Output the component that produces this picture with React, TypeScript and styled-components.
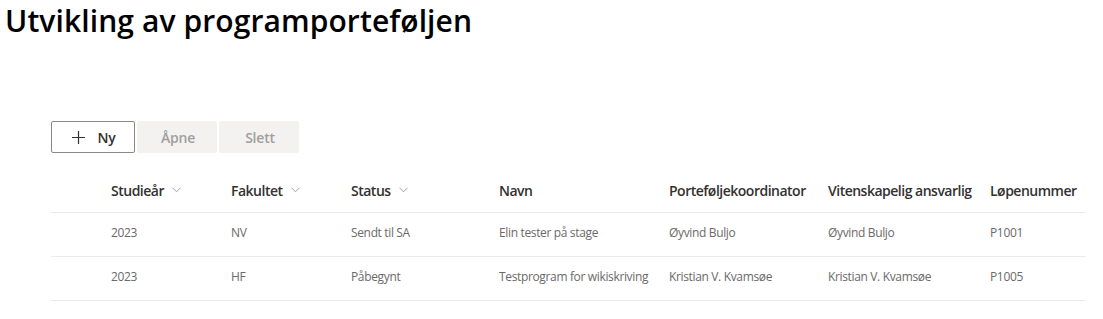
import React from "react";
import styled, { createGlobalStyle } from "styled-components";

const GlobalStyle = createGlobalStyle`
  body {
    margin: 0;
    background: #ffffff;
    font-family: "Open Sans", "Noto Sans", sans-serif;
    color: #323130;
  }
`;

const Page = styled.div`
  display: flex;
  flex-direction: column;
  width: 1103px;
`;

const Title = styled.h1`
  margin: 0;
  padding-left: 5px;
  height: 40px;
  line-height: 42px;
  font-size: 30px;
  font-weight: 600;
  color: #000000;
  letter-spacing: 0.1px;
`;

const Content = styled.div`
  display: flex;
  flex-direction: column;
  margin-top: 81px;
  margin-left: 51px;
  width: 1035px;
`;

const Toolbar = styled.div`
  display: flex;
  gap: 2px;
`;

const Button = styled.button<{ $disabled?: boolean; $w: number }>`
  display: flex;
  align-items: center;
  justify-content: center;
  gap: 12px;
  width: ${(p) => p.$w}px;
  height: 32px;
  box-sizing: border-box;
  border-radius: 2px;
  border: 1px solid ${(p) => (p.$disabled ? "#f3f2f1" : "#8a8886")};
  background: ${(p) => (p.$disabled ? "#f3f2f1" : "#ffffff")};
  color: ${(p) => (p.$disabled ? "#a19f9d" : "#323130")};
  font-family: inherit;
  font-size: 14px;
  font-weight: 600;
  letter-spacing: -0.2px;
  padding: 0 16px 0 18px;
  cursor: ${(p) => (p.$disabled ? "default" : "pointer")};
`;

const Table = styled.div`
  display: flex;
  flex-direction: column;
  margin-top: 17px;
`;

const Row = styled.div<{ $header?: boolean }>`
  display: grid;
  grid-template-columns: 60px 120px 120px 148px 170px 159px 162px 96px;
  align-items: center;
  height: ${(p) => (p.$header ? 42 : 43)}px;
  border-bottom: 1px solid #edebe9;
`;

const HeadCell = styled.div`
  display: flex;
  align-items: center;
  gap: 8px;
  padding-bottom: 2px;
  font-size: 14px;
  font-weight: 600;
  color: #323130;
  white-space: nowrap;
  letter-spacing: -0.5px;
`;

const Cell = styled.div`
  padding-bottom: 4px;
  font-size: 12px;
  color: #6b6967;
  white-space: nowrap;
  letter-spacing: -0.35px;
`;

const Chevron = () => (
  <svg width="9" height="6" viewBox="0 0 9 6">
    <path d="M0.5 0.8 L4.5 4.8 L8.5 0.8" fill="none" stroke="#a19f9d" strokeWidth="1" />
  </svg>
);

const Plus = () => (
  <svg width="13" height="13" viewBox="0 0 13 13">
    <path d="M6.5 0 V13 M0 6.5 H13" stroke="#323130" strokeWidth="1.2" />
  </svg>
);

const columns = [
  { label: "Studieår", sortable: true },
  { label: "Fakultet", sortable: true },
  { label: "Status", sortable: true },
  { label: "Navn" },
  { label: "Porteføljekoordinator" },
  { label: "Vitenskapelig ansvarlig" },
  { label: "Løpenummer" },
];

const rows = [
  ["2023", "NV", "Sendt til SA", "Elin tester på stage", "Øyvind Buljo", "Øyvind Buljo", "P1001"],
  ["2023", "HF", "Påbegynt", "Testprogram for wikiskriving", "Kristian V. Kvamsøe", "Kristian V. Kvamsøe", "P1005"],
];

export default function App() {
  return (
    <Page>
      <GlobalStyle />
      <Title>Utvikling av programporteføljen</Title>
      <Content>
        <Toolbar>
          <Button $w={84}>
            <Plus />
            Ny
          </Button>
          <Button $w={80} $disabled>
            Åpne
          </Button>
          <Button $w={80} $disabled>
            Slett
          </Button>
        </Toolbar>
        <Table>
          <Row $header>
            <div />
            {columns.map((c) => (
              <HeadCell key={c.label}>
                {c.label}
                {c.sortable && <Chevron />}
              </HeadCell>
            ))}
          </Row>
          {rows.map((r) => (
            <Row key={r[6]}>
              <div />
              {r.map((v, i) => (
                <Cell key={i}>{v}</Cell>
              ))}
            </Row>
          ))}
        </Table>
      </Content>
    </Page>
  );
}
